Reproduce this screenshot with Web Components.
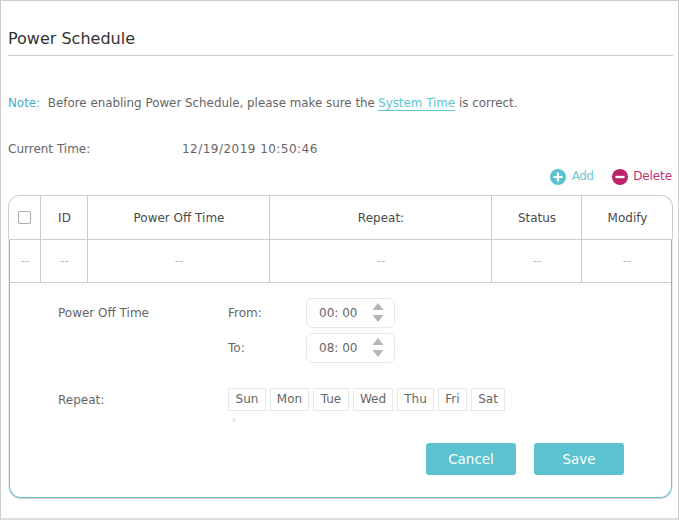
<!DOCTYPE html>
<html>
<head>
<meta charset="utf-8">
<style>
  html, body { margin: 0; padding: 0; background: #fff; }
  body { font-family: "DejaVu Sans", sans-serif; }
</style>
</head>
<body>
<power-page>
  <span slot="title">Power Schedule</span>
  <note-line></note-line>
  <time-line></time-line>
  <table-tools></table-tools>
  <schedule-table></schedule-table>
</power-page>

<script>
class PowerPage extends HTMLElement {
  constructor() {
    super();
    this.attachShadow({ mode: 'open' });
    this.shadowRoot.innerHTML = `
      <style>
      :host {
        display: block;
        box-sizing: border-box;
        width: 679px;
        height: 520px;
        border: 1px solid #ccc;
        border-bottom: 2px solid #ddd;
        padding: 0 5px 0 7px;
      }
      h2 {
        margin: 0;
        height: 55px;
        box-sizing: border-box;
        padding-top: 28px;
        font-size: 16px;
        line-height: 20px;
        font-weight: normal;
        color: #333;
        border-bottom: 1px solid #ccc;
      }
      </style>
      <h2><slot name="title"></slot></h2>
      <slot></slot>
    `;
  }
}

class NoteLine extends HTMLElement {
  constructor() {
    super();
    this.attachShadow({ mode: 'open' });
    this.shadowRoot.innerHTML = `
      <style>
      :host {
        display: block;
        margin-top: 37px;
        font-size: 11.87px;
        line-height: 20px;
        color: #666;
        white-space: nowrap;
      }
      .note { margin-right: 4px; color: #48a9c9; }
      a { color: #5ec4d0; text-decoration: none; border-bottom: 1px solid #5ec4d0; margin-left: -0.5px; }
      </style>
      <span class="note">Note:</span> Before enabling Power Schedule, please make sure the <a>System Time</a> is correct.
    `;
  }
}

class TimeLine extends HTMLElement {
  constructor() {
    super();
    this.attachShadow({ mode: 'open' });
    this.shadowRoot.innerHTML = `
      <style>
      :host {
        display: grid;
        grid-template-columns: 174px auto;
        margin-top: 26px;
        font-size: 12px;
        line-height: 20px;
        color: #666;
      }
      .now { letter-spacing: 0.47px; }
      </style>
      <span>Current Time:</span><span class="now">12/19/2019 10:50:46</span>
    `;
  }
}

class TableTools extends HTMLElement {
  constructor() {
    super();
    this.attachShadow({ mode: 'open' });
    this.shadowRoot.innerHTML = `
      <style>
      :host {
        display: flex;
        justify-content: flex-end;
        gap: 19px;
        margin-top: 8px;
        padding-right: 1px;
        height: 19px;
        font-size: 12px;
        line-height: 19px;
      }
      span { display: flex; align-items: center; gap: 5px; }
      .add { color: #6fc7d4; gap: 6px; letter-spacing: -0.6px; }
      .del { color: #c4316f; letter-spacing: -0.1px; }
      svg { width: 16px; height: 16px; display: block; }
      </style>
      <span class="add">
        <svg viewBox="0 0 16 16"><circle cx="8" cy="8" r="8" fill="#5bc2cf"/><path d="M3.5 8h9M8 3.5v9" stroke="#fff" stroke-width="2.2"/></svg>
        Add
      </span>
      <span class="del">
        <svg viewBox="0 0 16 16"><circle cx="8" cy="8" r="8" fill="#bc2468"/><path d="M3.5 8h9" stroke="#fff" stroke-width="2.4"/></svg>
        Delete
      </span>
    `;
  }
}

class ScheduleTable extends HTMLElement {
  constructor() {
    super();
    this.attachShadow({ mode: 'open' });
    this.shadowRoot.innerHTML = `
      <style>
      :host {
        display: block;
        width: 665px;
        margin-top: 9px;
        font-size: 12px;
        color: #666;
      }
      .top {
        border: 1px solid #ccc;
        border-bottom: 0;
        border-radius: 12px 12px 0 0;
      }
      .open {
        box-sizing: border-box;
        height: 258px;
        margin: 0 1px;
        border: 1px solid #6cc2cf;
        border-top: 0;
        border-radius: 0 0 12px 12px;
        box-shadow: 0 1px 0 #ccc, 0 0 0 1px #eee;
      }
      .row {
        display: grid;
        grid-template-columns: 31px 47px 182px 222px 90px 1fr;
      }
      .data { grid-template-columns: 30px 47px 182px 222px 90px 1fr; }
      .row > div {
        display: flex;
        align-items: center;
        justify-content: center;
        padding-left: 1px;
        border-left: 1px solid #ccc;
        border-bottom: 1px solid #ccc;
      }
      .row > div:first-child { border-left: 0; padding-left: 0; }
      .head > div { height: 43px; color: #4a4a4a; }
      .data > div { height: 42px; color: #bbb; }
      .box {
        width: 11px;
        height: 11px;
        border: 1px solid #aaa;
        border-radius: 2px;
      }
      </style>
      <div class="top">
        <div class="row head">
          <div><span class="box"></span></div>
          <div>ID</div>
          <div>Power Off Time</div>
          <div>Repeat:</div>
          <div>Status</div>
          <div>Modify</div>
        </div>
      </div>
      <div class="open">
        <div class="row data">
          <div>--</div><div>--</div><div>--</div><div>--</div><div>--</div><div>--</div>
        </div>
        <edit-form></edit-form>
      </div>
    `;
  }
}

class EditForm extends HTMLElement {
  constructor() {
    super();
    this.attachShadow({ mode: 'open' });
    this.shadowRoot.innerHTML = `
      <style>
      :host {
        display: block;
        box-sizing: border-box;
        padding: 14px 47px 0 48px;
        font-size: 12px;
        color: #666;
      }
      .times {
        display: grid;
        grid-template-columns: 170px 78px 1fr;
        grid-auto-rows: 31px;
        row-gap: 4px;
        align-items: center;
      }
      .repeat {
        display: grid;
        grid-template-columns: 170px 1fr;
        align-items: center;
        margin-top: 25px;
      }
      .days { display: flex; gap: 4px; }
      .dot {
        width: 4px;
        height: 4px;
        margin: 7px 0 0 174px;
        border-radius: 50%;
        background: #e8e8e8;
      }
      .actions {
        display: flex;
        justify-content: flex-end;
        gap: 18px;
        margin-top: 21px;
      }
      button {
        width: 90px;
        height: 32px;
        border: 0;
        border-radius: 3px;
        background: #5bc2cf;
        color: #fff;
        font: 13.5px "DejaVu Sans", sans-serif;
      }
      </style>
      <div class="times">
        <span>Power Off Time</span><span>From:</span><time-spin>00: 00</time-spin>
        <span></span><span>To:</span><time-spin>08: 00</time-spin>
      </div>
      <div class="repeat">
        <span>Repeat:</span>
        <div class="days">
          <day-chip w="38">Sun</day-chip><day-chip w="39">Mon</day-chip><day-chip w="36">Tue</day-chip><day-chip w="40">Wed</day-chip><day-chip w="37">Thu</day-chip><day-chip w="29">Fri</day-chip><day-chip w="34">Sat</day-chip>
        </div>
      </div>
      <div class="dot"></div>
      <div class="actions">
        <button>Cancel</button><button>Save</button>
      </div>
    `;
  }
}

class TimeSpin extends HTMLElement {
  constructor() {
    super();
    this.attachShadow({ mode: 'open' });
    this.shadowRoot.innerHTML = `
      <style>
      :host {
        display: flex;
        align-items: center;
        box-sizing: border-box;
        width: 89px;
        height: 30px;
        padding-left: 12px;
        border: 1px solid #e8e8e8;
        border-radius: 6px;
        color: #666;
        font-size: 12px;
      }
      .label { width: 48px; white-space: nowrap; }
      svg { width: 12px; height: 20px; display: block; margin-left: 5px; }
      </style>
      <span class="label"><slot></slot></span>
      <svg viewBox="0 0 12 20"><path d="M6 0l5.5 7H.5z" fill="#b5b5b5"/><path d="M6 19l5.5-7H.5z" fill="#b5b5b5"/></svg>
    `;
  }
}

class DayChip extends HTMLElement {
  constructor() {
    super();
    this.attachShadow({ mode: 'open' });
    this.shadowRoot.innerHTML = `
      <style>
      :host {
        display: block;
        box-sizing: border-box;
        height: 23px;
        border: 1px solid #e8e8e8;
        font-size: 12px;
        line-height: 21px;
        text-align: center;
        color: #666;
      }
      </style>
      <slot></slot>
    `;
    this.style.width = this.getAttribute('w') + 'px';
  }
}

customElements.define('power-page', PowerPage);
customElements.define('note-line', NoteLine);
customElements.define('time-line', TimeLine);
customElements.define('table-tools', TableTools);
customElements.define('schedule-table', ScheduleTable);
customElements.define('edit-form', EditForm);
customElements.define('time-spin', TimeSpin);
customElements.define('day-chip', DayChip);
</script>
</body>
</html>
